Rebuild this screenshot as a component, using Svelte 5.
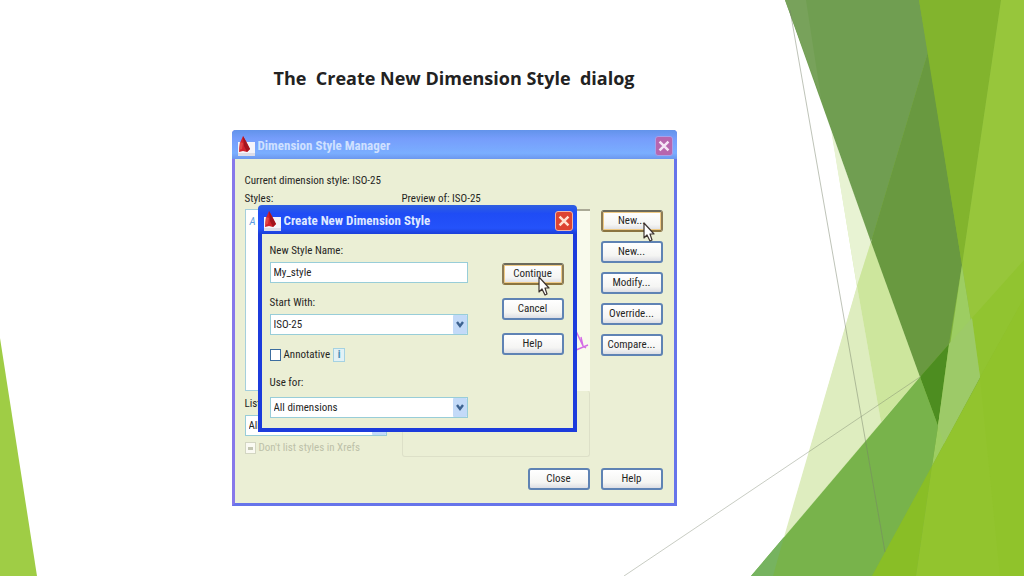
<script>
  let styleName = $state('My_style');
  let startWith = $state('ISO-25');
  let useFor = $state('All dimensions');
  let listFilter = $state('All styles');
  let annotative = $state(false);

  const managerActions = ['New...', 'New...', 'Modify...', 'Override...', 'Compare...'];
  const dialogActions = ['Continue', 'Cancel', 'Help'];
</script>

{#snippet appIcon()}
  <svg class="app-icon" viewBox="0 0 18 20" aria-hidden="true">
    <path d="M1 6h17v14H1z" fill="#f4f4fa" />
    <path d="M1 17h17v3H1z" fill="#dcdce8" />
    <path d="M6 0l3 5 4 8-3 3-4-1-4 1 1-9z" fill="#d3202b" />
    <path d="M6 0l7 13-3 3-3-6z" fill="#a3141f" />
    <path d="M3 6l3 1-1 6-3 1z" fill="#e04545" />
  </svg>
{/snippet}

{#snippet closeIcon()}
  <svg viewBox="0 0 18 20" aria-hidden="true">
    <path d="M4 5l10 10M14 5l-10 10" stroke="currentColor" stroke-width="2.8" fill="none" />
  </svg>
{/snippet}

{#snippet chevron()}
  <svg class="chevron" viewBox="0 0 14 19" aria-hidden="true">
    <rect width="14" height="19" rx="1" fill="#c3daf8" />
    <path d="M4 7l3 4 3-4" stroke="#3d6290" stroke-width="2.4" fill="none" />
  </svg>
{/snippet}

{#snippet pointer()}
  <svg class="pointer" viewBox="0 0 12 20" aria-hidden="true">
    <path
      d="M1 1v15l3-3 3 6 2-1-2-6h4z"
      fill="#fff"
      stroke="#3d3430"
      stroke-width="1.2"
      stroke-linejoin="round"
    />
  </svg>
{/snippet}

<main class="slide">
  <svg class="backdrop" viewBox="0 0 1024 576" preserveAspectRatio="none" aria-hidden="true">
    <path d="M0 338L37 576H0z" fill="#9fcd45" />

    <!-- solid base so the facets above it show no seams -->
    <path d="M832 134L921 377L785 536L857 287z" fill="#d8ebb2" />
    <path d="M786 0H1024V576H752L921 377z" fill="#80b23c" />

    <path d="M831 130L871 242L857 286z" fill="#e8f3d3" />
    <path d="M871 242L920 377L881 422L857 286z" fill="#cde69d" />
    <path d="M857 286L881 422L784 537z" fill="#deedbf" />

    <path d="M785 0H919L928 52L871 242z" fill="#709e51" />
    <path d="M785 0H806L821 98z" fill="#78a25b" />
    <path d="M928 52L962 265L949 344L920 377L871 242z" fill="#699940" />
    <path d="M949 344L938 426L920 377z" fill="#4d8d20" />
    <path d="M919 0H1001L962 265z" fill="#82b42d" />
    <path d="M1001 0H1024V298L980 377L962 265z" fill="#97c63b" />
    <path d="M1024 260V298L980 377L972 318z" fill="#91c430" />
    <path d="M962 265L980 377L932 466z" fill="#9dcd62" />
    <path d="M949 344L972 318L980 377L944 444L938 426z" fill="#9dca68" />
    <path d="M920 377L938 426L932 466L872 576H751z" fill="#78b34b" />
    <path d="M784 537L773 576H751z" fill="#76b35f" />
    <path d="M932 466L916 576H872z" fill="#89be26" />
    <path d="M932 466L1024 298V576H916z" fill="#92c42e" />
    <path d="M1024 298V576H1000L980 377z" fill="#90c32b" />

    <path d="M790 10L885 552" stroke="#75806a" stroke-opacity=".6" stroke-width=".8" />
    <path d="M624 576L920 377" stroke="#75806a" stroke-opacity=".5" stroke-width=".8" />
  </svg>

  <h1>The  Create New Dimension Style  dialog</h1>

  <section class="window manager" aria-label="Dimension Style Manager">
    <header class="titlebar">
      {@render appIcon()}
      <h2>Dimension Style Manager</h2>
      <button class="close" aria-label="Close Dimension Style Manager">{@render closeIcon()}</button>
    </header>

    <div class="manager-body">
      <p>Current dimension style: ISO-25</p>

      <div class="columns">
        <div class="styles">
          <p>Styles:</p>
          <div class="style-list"><span>A</span></div>
          <label for="list-filter">List:</label>
          <div class="select">
            <select id="list-filter" bind:value={listFilter}>
              <option>All styles</option>
            </select>
            {@render chevron()}
          </div>
          <label class="check disabled">
            <input type="checkbox" checked disabled />
            Don't list styles in Xrefs
          </label>
        </div>

        <div class="preview">
          <p>Preview of: ISO-25</p>
          <div class="preview-pane">
            <svg viewBox="0 0 14 24" aria-hidden="true">
              <path d="M0 2l7 15M0 21l12-5M5 8l2 9 3 2" stroke="#d56be6" stroke-width="1.4" fill="none" />
            </svg>
          </div>
          <div class="description"></div>
        </div>

        <div class="actions">
          {#each managerActions as action, i}
            <button class="btn" class:hot={i === 0}>
              {action}
              {#if i === 0}{@render pointer()}{/if}
            </button>
          {/each}
        </div>
      </div>

      <footer>
        <button class="btn">Close</button>
        <button class="btn">Help</button>
      </footer>
    </div>

    <div class="window dialog" role="dialog" aria-label="Create New Dimension Style">
      <header class="titlebar">
        {@render appIcon()}
        <h2>Create New Dimension Style</h2>
        <button class="close" aria-label="Close dialog">{@render closeIcon()}</button>
      </header>

      <div class="dialog-body">
        <div class="form">
          <div class="field">
            <label for="style-name">New Style Name:</label>
            <input id="style-name" type="text" bind:value={styleName} />
          </div>
          <div class="field">
            <label for="start-with">Start With:</label>
            <div class="select">
              <select id="start-with" bind:value={startWith}>
                <option>ISO-25</option>
              </select>
              {@render chevron()}
            </div>
          </div>
          <div class="annotative">
            <label class="check">
              <input type="checkbox" bind:checked={annotative} />
              Annotative
            </label>
            <span class="info">i</span>
          </div>
          <div class="field roomy">
            <label for="use-for">Use for:</label>
            <div class="select">
              <select id="use-for" bind:value={useFor}>
                <option>All dimensions</option>
              </select>
              {@render chevron()}
            </div>
          </div>
        </div>

        <div class="dialog-actions">
          {#each dialogActions as action, i}
            <button class="btn" class:hot={i === 0}>
              {action}
              {#if i === 0}{@render pointer()}{/if}
            </button>
          {/each}
        </div>
      </div>
    </div>
  </section>
</main>

<style>
  :global(body) {
    background: #fff;
  }

  .slide {
    box-sizing: border-box;
    min-height: 100vh;
    padding: 64px 116px 70px 0;
    position: relative;
    display: flex;
    flex-direction: column;
    align-items: center;
    gap: 38px;
    overflow: hidden;
    font-family: "Roboto Condensed", Roboto, sans-serif;
    font-size: 11px;
    line-height: 16px;
    color: #26261f;
  }

  .backdrop {
    position: absolute;
    inset: 0;
    width: 100%;
    height: 100%;
  }

  h1,
  h2,
  p {
    margin: 0;
  }

  h1 {
    position: relative;
    font-family: "Trebuchet MS", "Open Sans", sans-serif;
    font-size: 18px;
    line-height: 28px;
    font-weight: 700;
    color: #222;
    white-space: pre;
  }

  button,
  input,
  select {
    box-sizing: border-box;
    margin: 0;
    font: inherit;
    color: inherit;
  }

  .window {
    box-sizing: border-box;
    background: #ebefd5;
  }

  .manager {
    position: relative;
    width: 445px;
    border: 3px solid #6674ea;
    border-top: 0;
    border-left-color: #8778ea;
    border-radius: 4px 4px 0 0;
  }

  .titlebar {
    height: 29px;
    margin: 0 -3px;
    padding: 2px 4px 0 5px;
    box-sizing: border-box;
    display: flex;
    align-items: center;
    gap: 3px;
    border-radius: 4px 4px 0 0;
    background: linear-gradient(#6293ea, #769dfb 30%, #7aaeff 80%, #6c97ee);
    color: #cfe0ff;
  }

  .titlebar h2 {
    flex: 1;
    font-size: 13px;
    line-height: 16px;
    font-weight: 700;
  }

  .app-icon {
    width: 18px;
    height: 20px;
  }

  .close {
    width: 18px;
    height: 20px;
    padding: 0;
    border: 1px solid #a9a0e8;
    border-radius: 3px;
    background: #b766ae;
    color: #f4e4f6;
  }

  .close svg {
    display: block;
    width: 100%;
    height: 100%;
  }

  .manager-body {
    padding: 14px 11px 13px 10px;
  }

  .columns {
    margin-top: 2px;
    display: grid;
    grid-template-columns: 142px 1fr 62px;
    column-gap: 11px;
  }

  .styles {
    display: flex;
    flex-direction: column;
  }

  .style-list {
    height: 182px;
    margin: 2px 0 5px;
    padding: 4px;
    box-sizing: border-box;
    border: 1px solid #a5cfdc;
    background: #fff;
    color: #5c9be0;
    font-style: italic;
  }

  .styles .select {
    margin: 3px 0;
  }

  .preview {
    margin-left: 4px;
  }

  .preview-pane {
    height: 182px;
    margin-top: 2px;
    box-sizing: border-box;
    padding-top: 118px;
    border-top: 2px solid #aaa996;
    background: #f9faec;
    text-align: right;
  }

  .preview-pane svg {
    width: 14px;
    height: 24px;
  }

  .description {
    height: 66px;
    box-sizing: border-box;
    border: 1px solid #dde0c8;
    border-top: 0;
    border-radius: 3px;
  }

  .actions {
    padding-top: 19px;
    display: flex;
    flex-direction: column;
    gap: 9px;
  }

  .btn {
    position: relative;
    width: 62px;
    height: 22px;
    padding: 0;
    border: 2px solid #5f83b4;
    border-radius: 3px;
    background: linear-gradient(#fff, #f5f5f3 70%, #dddee4);
    line-height: 16px;
    text-align: center;
  }

  .btn.hot {
    border-color: #6b6a5c #8c7b55 #8a7440;
    box-shadow: inset 0 0 0 1px #efca85;
  }

  .pointer {
    position: absolute;
    left: 34px;
    top: 11px;
    width: 12px;
    height: 20px;
    z-index: 1;
  }

  .actions .pointer {
    left: 40px;
    top: 10px;
  }

  footer {
    margin-top: 11px;
    display: flex;
    justify-content: flex-end;
    gap: 11px;
  }

  .dialog {
    position: absolute;
    left: 23px;
    top: 75px;
    width: 319px;
    border: 4px solid #1c3bdc;
    border-top: 0;
    border-radius: 6px 6px 0 0;
  }

  .dialog .titlebar {
    margin: 0 -4px;
    background: linear-gradient(#2f5fe0, #1f4cf5 30%, #2452fa 80%, #1b3fd8);
    color: #dfe8ff;
  }

  .dialog .close {
    border-color: #f0b4a8;
    background: #dd4432;
    color: #ffe3d2;
  }

  .dialog-body {
    padding: 9px 9px 10px 8px;
    display: flex;
    justify-content: space-between;
  }

  .form {
    width: 198px;
    display: flex;
    flex-direction: column;
    gap: 12px;
  }

  .field {
    display: flex;
    flex-direction: column;
    gap: 3px;
  }

  .field.roomy {
    gap: 6px;
  }

  input[type='text'],
  select {
    width: 100%;
    height: 21px;
    padding: 0 3px;
    border: 1px solid #98cdd8;
    border-radius: 0;
    background: #fff;
    appearance: none;
  }

  .select {
    position: relative;
  }

  .chevron {
    position: absolute;
    right: 1px;
    top: 1px;
    width: 14px;
    height: 19px;
    pointer-events: none;
  }

  .annotative,
  .check {
    display: flex;
    align-items: center;
    gap: 3px;
  }

  .check input {
    appearance: none;
    width: 11px;
    height: 12px;
    border: 1px solid #3c6d9f;
    background: #fff;
  }

  .disabled {
    margin-top: 1px;
    color: #bdc1a9;
  }

  .check.disabled input {
    border-color: #d3d6c2;
    background: linear-gradient(#c3c6b2, #c3c6b2) center / 5px 3px no-repeat #fafaf2;
  }

  .info {
    width: 10px;
    height: 12px;
    border: 1px solid #a5d2e2;
    background: #e2f1f5;
    color: #4b90b5;
    line-height: 12px;
    font-weight: 700;
    text-align: center;
  }

  .dialog-actions {
    padding-top: 20px;
    display: flex;
    flex-direction: column;
    gap: 13px;
  }
</style>
